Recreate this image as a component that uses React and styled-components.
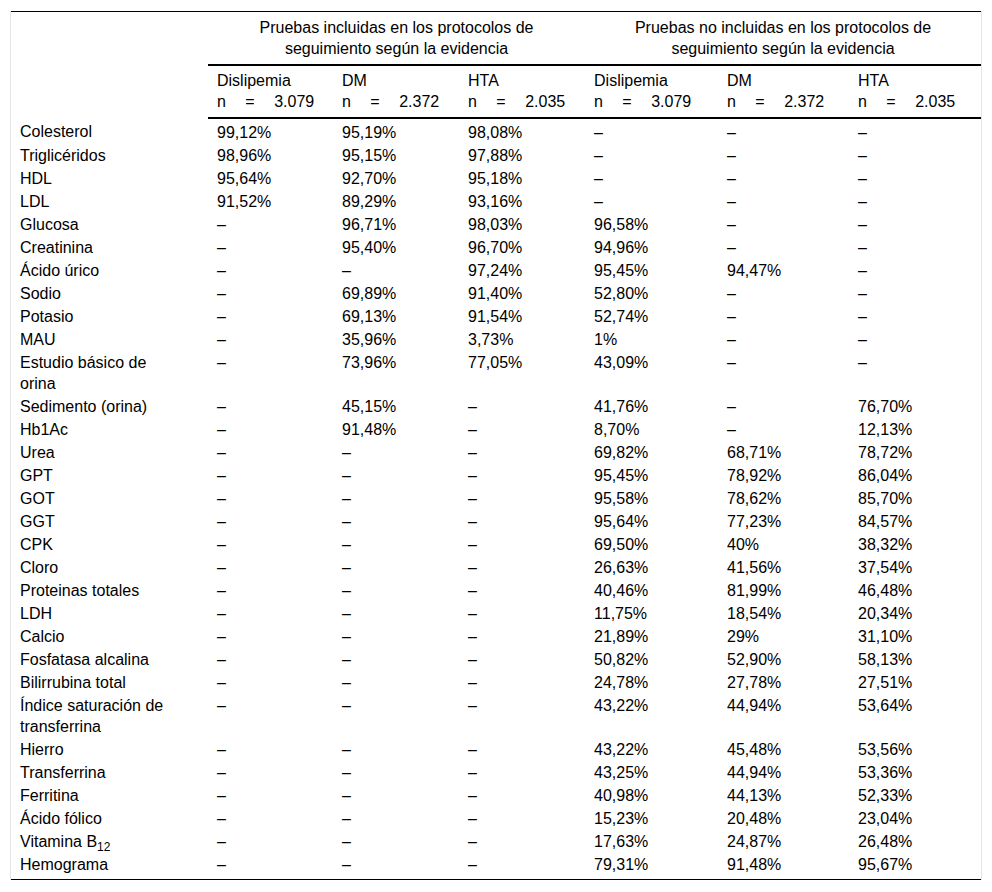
import React from 'react';
import styled, { createGlobalStyle } from 'styled-components';

const GlobalStyle = createGlobalStyle`
  body {
    margin: 0;
    background: #fff;
    font-family: "Liberation Sans", Arial, sans-serif;
    color: #000;
  }
`;

const Frame = styled.div`
  margin: 11px 10px 0 10px;
  width: 970px;
  border-left: 1px solid #e4e4e4;
  border-right: 1px solid #e4e4e4;
`;

const Table = styled.table`
  width: 970px;
  border-collapse: collapse;
  table-layout: fixed;
  border-top: 1px solid #000;
  border-bottom: 1px solid #000;
  font-size: 16px;
  line-height: 21px;
`;

const Col = styled.col`
  width: ${({ $w }) => $w}px;
`;

const GroupHead = styled.th`
  font-weight: normal;
  text-align: center;
  padding: 5px 9px 5px;
  border-bottom: ${({ $line }) => ($line ? '2px solid #000' : 'none')};
  vertical-align: top;
`;

const SubHead = styled.th`
  font-weight: normal;
  text-align: left;
  padding: 4px 9px 5px;
  border-bottom: 2px solid #000;
  vertical-align: top;
`;

const Count = styled.span`
  display: block;
  word-spacing: 15px;
  white-space: nowrap;
`;

const Row = styled.tr`
  &:first-child td {
    padding-top: 3px;
  }
  &:last-child td {
    padding-bottom: 4px;
  }
`;

const Label = styled.td`
  padding: 1px 35px 1px 9px;
  vertical-align: top;
`;

const Cell = styled.td`
  padding: 1px 9px;
  vertical-align: top;
  white-space: nowrap;
`;

const Sub = styled.sub`
  font-size: 12px;
  line-height: 0;
  vertical-align: -4px;
`;

const D = '–';

const widths = [197, 125, 126, 126, 133, 131, 132];

const groups = [
  ['Dislipemia', '3.079'],
  ['DM', '2.372'],
  ['HTA', '2.035'],
  ['Dislipemia', '3.079'],
  ['DM', '2.372'],
  ['HTA', '2.035'],
];

const rows = [
  ['Colesterol', '99,12%', '95,19%', '98,08%', D, D, D],
  ['Triglicéridos', '98,96%', '95,15%', '97,88%', D, D, D],
  ['HDL', '95,64%', '92,70%', '95,18%', D, D, D],
  ['LDL', '91,52%', '89,29%', '93,16%', D, D, D],
  ['Glucosa', D, '96,71%', '98,03%', '96,58%', D, D],
  ['Creatinina', D, '95,40%', '96,70%', '94,96%', D, D],
  ['Ácido úrico', D, D, '97,24%', '95,45%', '94,47%', D],
  ['Sodio', D, '69,89%', '91,40%', '52,80%', D, D],
  ['Potasio', D, '69,13%', '91,54%', '52,74%', D, D],
  ['MAU', D, '35,96%', '3,73%', '1%', D, D],
  ['Estudio básico de orina', D, '73,96%', '77,05%', '43,09%', D, D],
  ['Sedimento (orina)', D, '45,15%', D, '41,76%', D, '76,70%'],
  ['Hb1Ac', D, '91,48%', D, '8,70%', D, '12,13%'],
  ['Urea', D, D, D, '69,82%', '68,71%', '78,72%'],
  ['GPT', D, D, D, '95,45%', '78,92%', '86,04%'],
  ['GOT', D, D, D, '95,58%', '78,62%', '85,70%'],
  ['GGT', D, D, D, '95,64%', '77,23%', '84,57%'],
  ['CPK', D, D, D, '69,50%', '40%', '38,32%'],
  ['Cloro', D, D, D, '26,63%', '41,56%', '37,54%'],
  ['Proteinas totales', D, D, D, '40,46%', '81,99%', '46,48%'],
  ['LDH', D, D, D, '11,75%', '18,54%', '20,34%'],
  ['Calcio', D, D, D, '21,89%', '29%', '31,10%'],
  ['Fosfatasa alcalina', D, D, D, '50,82%', '52,90%', '58,13%'],
  ['Bilirrubina total', D, D, D, '24,78%', '27,78%', '27,51%'],
  ['Índice saturación de transferrina', D, D, D, '43,22%', '44,94%', '53,64%'],
  ['Hierro', D, D, D, '43,22%', '45,48%', '53,56%'],
  ['Transferrina', D, D, D, '43,25%', '44,94%', '53,36%'],
  ['Ferritina', D, D, D, '40,98%', '44,13%', '52,33%'],
  ['Ácido fólico', D, D, D, '15,23%', '20,48%', '23,04%'],
  ['Vitamina B12', D, D, D, '17,63%', '24,87%', '26,48%'],
  ['Hemograma', D, D, D, '79,31%', '91,48%', '95,67%'],
];

const renderLabel = (text) =>
  text === 'Vitamina B12' ? (
    <>
      Vitamina B<Sub>12</Sub>
    </>
  ) : (
    text
  );

const App = () => (
  <>
    <GlobalStyle />
    <Frame>
      <Table>
        <colgroup>
          {widths.map((w, i) => (
            <Col key={i} $w={w} />
          ))}
        </colgroup>
        <thead>
          <tr>
            <GroupHead rowSpan={2} />
            <GroupHead colSpan={3} $line>
              Pruebas incluidas en los protocolos de
              <br />
              seguimiento según la evidencia
            </GroupHead>
            <GroupHead colSpan={3} $line>
              Pruebas no incluidas en los protocolos de
              <br />
              seguimiento según la evidencia
            </GroupHead>
          </tr>
          <tr>
            {groups.map(([name, n], i) => (
              <SubHead key={i}>
                {name}
                <Count>n = {n}</Count>
              </SubHead>
            ))}
          </tr>
        </thead>
        <tbody>
          {rows.map(([label, ...vals]) => (
            <Row key={label}>
              <Label>{renderLabel(label)}</Label>
              {vals.map((v, i) => (
                <Cell key={i}>{v}</Cell>
              ))}
            </Row>
          ))}
        </tbody>
      </Table>
    </Frame>
  </>
);

export default App;
